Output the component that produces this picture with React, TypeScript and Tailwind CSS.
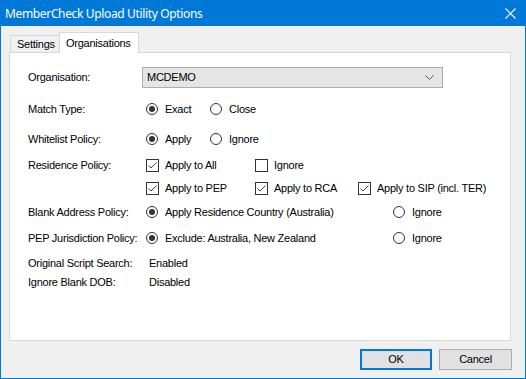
import React from "react";

const Radio = ({ checked }: { checked?: boolean }) => (
  <span className="w-[12px] h-[12px] rounded-full border border-[#333333] bg-white flex items-center justify-center shrink-0">
    {checked && <span className="w-[6px] h-[6px] rounded-full bg-[#333333]" />}
  </span>
);

const Check = ({ checked }: { checked?: boolean }) => (
  <span className="w-[13px] h-[13px] border border-[#333333] bg-white flex items-center justify-center shrink-0">
    {checked && (
      <svg width="11" height="11" viewBox="0 0 11 11">
        <path d="M1.5 5.5 L4 8 L9.5 2.5" fill="none" stroke="#444444" strokeWidth="1" />
      </svg>
    )}
  </span>
);

const RadioOpt = ({ label, checked, w }: { label: string; checked?: boolean; w?: string }) => (
  <div className={`flex items-center gap-[7px] ${w ?? ""}`}>
    <Radio checked={checked} />
    <span>{label}</span>
  </div>
);

const CheckOpt = ({ label, checked, w }: { label: string; checked?: boolean; w?: string }) => (
  <div className={`flex items-center gap-[6px] ${w ?? ""}`}>
    <Check checked={checked} />
    <span>{label}</span>
  </div>
);

const Label = ({ children }: { children?: React.ReactNode }) => (
  <div className="w-[114px] shrink-0">{children}</div>
);

export default function App() {
  return (
    <div
      className="w-[526px] h-[379px] border border-[#0078d7] bg-[#f0f0f0] flex flex-col text-black text-[11px] tracking-[-0.25px]"
      style={{ fontFamily: '"Liberation Sans", Arial, sans-serif' }}
    >
      <div className="h-[25px] bg-[#0078d7] flex items-center justify-between pl-[4px] pr-[9px] shrink-0">
        <span
          className="text-white text-[12px] tracking-[-0.35px]"
          style={{ fontFamily: '"Noto Sans", "Open Sans", sans-serif' }}
        >
          MemberCheck Upload Utility Options
        </span>
        <svg width="11" height="11" viewBox="0 0 11 11">
          <path d="M0.5 0.5 L10.5 10.5 M10.5 0.5 L0.5 10.5" stroke="#ffffff" strokeWidth="1.1" />
        </svg>
      </div>
      <div className="flex flex-col pl-[8px] pr-[14px] pt-[6px]">
        <div className="h-[20px] flex items-end pl-[1px]">
          <div className="w-[49px] h-[17px] border-l border-t border-[#d9d9d9] bg-[#f0f0f0] flex items-center pl-[6px]">
            Settings
          </div>
          <div className="w-[80px] h-[21px] -mb-px relative z-10 border-l border-t border-r border-[#d9d9d9] bg-white flex items-center pl-[6px]">
            Organisations
          </div>
        </div>
        <div className="h-[289px] border border-[#d9d9d9] bg-white pl-[18px] pt-[14px] flex flex-col">
          <div className="h-[21px] flex items-center">
            <Label>Organisation:</Label>
            <div className="w-[301px] h-[21px] border border-[#adadad] bg-[#e5e5e5] flex items-center justify-between pl-[4px] pr-[8px]">
              <span>MCDEMO</span>
              <svg width="9" height="6" viewBox="0 0 9 6">
                <path d="M0.5 0.5 L4.5 4.5 L8.5 0.5" fill="none" stroke="#555555" strokeWidth="1" />
              </svg>
            </div>
          </div>
          <div className="h-[20px] mt-[11px] flex items-center">
            <Label>Match Type:</Label>
            <div className="flex items-center pl-[4px]">
              <RadioOpt label="Exact" checked w="w-[64px]" />
              <RadioOpt label="Close" />
            </div>
          </div>
          <div className="h-[20px] mt-[10px] flex items-center">
            <Label>Whitelist Policy:</Label>
            <div className="flex items-center pl-[4px]">
              <RadioOpt label="Apply" checked w="w-[64px]" />
              <RadioOpt label="Ignore" />
            </div>
          </div>
          <div className="h-[20px] mt-[6px] flex items-center">
            <Label>Residence Policy:</Label>
            <div className="flex items-center pl-[4px]">
              <CheckOpt label="Apply to All" checked w="w-[109px]" />
              <CheckOpt label="Ignore" />
            </div>
          </div>
          <div className="h-[20px] mt-[3px] flex items-center">
            <Label />
            <div className="flex items-center pl-[4px]">
              <CheckOpt label="Apply to PEP" checked w="w-[109px]" />
              <CheckOpt label="Apply to RCA" checked w="w-[103px]" />
              <CheckOpt label="Apply to SIP (incl. TER)" checked />
            </div>
          </div>
          <div className="h-[20px] mt-[4px] flex items-center">
            <Label>Blank Address Policy:</Label>
            <div className="flex items-center pl-[4px]">
              <RadioOpt label="Apply Residence Country (Australia)" checked w="w-[247px]" />
              <RadioOpt label="Ignore" />
            </div>
          </div>
          <div className="h-[20px] mt-[6px] flex items-center">
            <Label>PEP Jurisdiction Policy:</Label>
            <div className="flex items-center pl-[4px]">
              <RadioOpt label="Exclude: Australia, New Zealand" checked w="w-[247px]" />
              <RadioOpt label="Ignore" />
            </div>
          </div>
          <div className="h-[18px] mt-[6px] flex items-center">
            <Label>Original Script Search:</Label>
            <span className="pl-[7px]">Enabled</span>
          </div>
          <div className="h-[18px] mt-[1px] flex items-center">
            <Label>Ignore Blank DOB:</Label>
            <span className="pl-[7px]">Disabled</span>
          </div>
        </div>
        <div className="flex justify-end gap-[7px] mt-[8px]">
          <button className="w-[72px] h-[21px] border-2 border-[#0078d7] bg-[#e1e1e1] flex items-center justify-center">
            OK
          </button>
          <button className="w-[73px] h-[21px] border border-[#adadad] bg-[#e1e1e1] flex items-center justify-center -mr-[1px]">
            Cancel
          </button>
        </div>
      </div>
    </div>
  );
}
